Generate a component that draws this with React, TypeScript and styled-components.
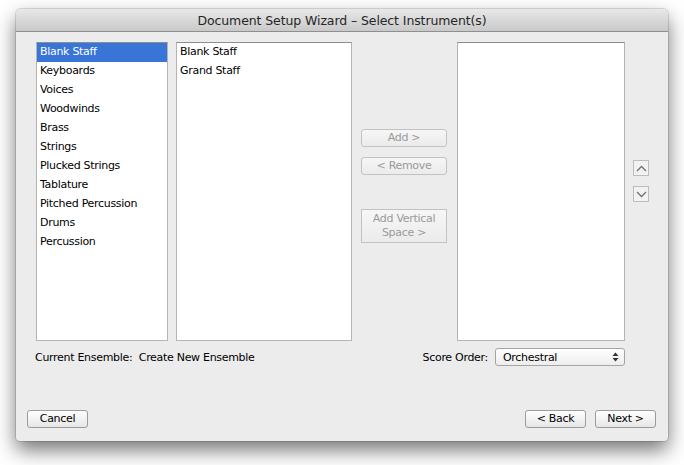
import styled, { createGlobalStyle } from 'styled-components'

const GlobalStyle = createGlobalStyle`
    html, body {
        margin: 0;
        padding: 0;
        background: #ffffff;
        font-family: "DejaVu Sans", "Liberation Sans", sans-serif;
    }
`

const categories = [
    'Blank Staff',
    'Keyboards',
    'Voices',
    'Woodwinds',
    'Brass',
    'Strings',
    'Plucked Strings',
    'Tablature',
    'Pitched Percussion',
    'Drums',
    'Percussion',
]

const instruments = ['Blank Staff', 'Grand Staff']

const App = () => (
    <>
        <GlobalStyle />
        <Page>
            <Window>
                <TitleBar>Document Setup Wizard – Select Instrument(s)</TitleBar>
                <Body>
                    <MainRow>
                        <ListBox $width={132}>
                            {categories.map((c, i) => (
                                <ListItem key={c} $selected={i === 0}>{c}</ListItem>
                            ))}
                        </ListBox>
                        <ListBox $width={176}>
                            {instruments.map((c) => (
                                <ListItem key={c}>{c}</ListItem>
                            ))}
                        </ListBox>
                        <MiddleColumn>
                            <PushButton disabled>Add &gt;</PushButton>
                            <PushButton disabled>&lt; Remove</PushButton>
                            <TallButton disabled>Add Vertical<br />Space &gt;</TallButton>
                        </MiddleColumn>
                        <ListBox $width={168} />
                        <ArrowColumn>
                            <ArrowButton>
                                <svg width="11" height="7" viewBox="0 0 11 7">
                                    <path d="M1 6 L5.5 1.5 L10 6" fill="none" stroke="#707070" strokeWidth="1.3" />
                                </svg>
                            </ArrowButton>
                            <ArrowButton>
                                <svg width="11" height="7" viewBox="0 0 11 7">
                                    <path d="M1 1 L5.5 5.5 L10 1" fill="none" stroke="#707070" strokeWidth="1.3" />
                                </svg>
                            </ArrowButton>
                        </ArrowColumn>
                    </MainRow>
                    <InfoRow>
                        <Ensemble>Current Ensemble:&nbsp; Create New Ensemble</Ensemble>
                        <ScoreOrder>
                            <span>Score Order:</span>
                            <Select>
                                <span>Orchestral</span>
                                <svg width="7" height="10" viewBox="0 0 7 10">
                                    <path d="M0.5 4 L3.5 0.5 L6.5 4 Z" fill="#333" />
                                    <path d="M0.5 6 L3.5 9.5 L6.5 6 Z" fill="#333" />
                                </svg>
                            </Select>
                        </ScoreOrder>
                    </InfoRow>
                    <Footer>
                        <FooterButton>Cancel</FooterButton>
                        <FooterRight>
                            <FooterButton>&lt; Back</FooterButton>
                            <FooterButton>Next &gt;</FooterButton>
                        </FooterRight>
                    </Footer>
                </Body>
            </Window>
        </Page>
    </>
)

export default App

const Page = styled.div`
    width: 684px;
    height: 465px;
    padding: 9px 16px 0 16px;
    box-sizing: border-box;
`

const Window = styled.div`
    width: 652px;
    height: 432px;
    background: #ececec;
    border-radius: 5px 5px 4px 4px;
    box-shadow: 0 9px 20px rgba(0, 0, 0, 0.55), 0 0 0 1px rgba(0, 0, 0, 0.12);
    display: flex;
    flex-direction: column;
    overflow: hidden;
`

const TitleBar = styled.div`
    height: 22px;
    flex: none;
    display: flex;
    align-items: center;
    justify-content: center;
    font-size: 12.5px;
    color: #262626;
    letter-spacing: -0.1px;
    background: linear-gradient(#e8e8e8, #c9c9c9);
    border-bottom: 1px solid #8f8f8f;
    border-radius: 5px 5px 0 0;
`

const Body = styled.div`
    flex: 1;
    padding: 10px 0 0 20px;
    font-size: 11px;
    color: #000;
    letter-spacing: -0.3px;
`

const MainRow = styled.div`
    display: flex;
    align-items: flex-start;
    height: 299px;
`

const ListBox = styled.div<{ $width: number }>`
    width: ${(p) => p.$width}px;
    height: 299px;
    box-sizing: border-box;
    background: #fff;
    border: 1px solid #b4b4b4;
    border-top-color: #8e8e8e;
    margin-right: 8px;
    &:nth-child(4) {
        margin-right: 0;
    }
`

const ListItem = styled.div<{ $selected?: boolean }>`
    height: 19px;
    line-height: 18px;
    padding-left: 3px;
    white-space: nowrap;
    background: ${(p) => (p.$selected ? '#3875d7' : 'transparent')};
    color: ${(p) => (p.$selected ? '#fff' : '#000')};
`

const MiddleColumn = styled.div`
    width: 96px;
    margin-left: -8px;
    padding: 87px 0 0 9px;
    display: flex;
    flex-direction: column;
    gap: 10px;
`

const PushButton = styled.button`
    width: 86px;
    height: 18px;
    padding: 0;
    font-family: inherit;
    font-size: 11px;
    letter-spacing: -0.3px;
    color: #9a9a9a;
    border: 1px solid #c2c2c2;
    border-radius: 3px;
    background: linear-gradient(#f6f6f6, #ebebeb);
    line-height: 16px;
`

const TallButton = styled(PushButton)`
    height: 34px;
    margin-top: 24px;
    border-radius: 0;
    line-height: 14px;
`

const ArrowColumn = styled.div`
    padding: 118px 0 0 8px;
    display: flex;
    flex-direction: column;
    gap: 10px;
`

const ArrowButton = styled.div`
    width: 16px;
    height: 16px;
    box-sizing: border-box;
    border: 1px solid #bdbdbd;
    background: #f2f2f2;
    display: flex;
    align-items: center;
    justify-content: center;
`

const InfoRow = styled.div`
    display: flex;
    align-items: center;
    justify-content: space-between;
    width: 590px;
    margin-left: -1px;
    margin-top: 7px;
    height: 18px;
`

const Ensemble = styled.div`
    white-space: nowrap;
`

const ScoreOrder = styled.div`
    display: flex;
    align-items: center;
    gap: 7px;
`

const Select = styled.div`
    width: 130px;
    height: 18px;
    box-sizing: border-box;
    border: 1px solid #a5a5a5;
    border-radius: 3px;
    background: linear-gradient(#ffffff, #ededed);
    display: flex;
    align-items: center;
    justify-content: space-between;
    padding: 0 5px 0 7px;
`

const Footer = styled.div`
    display: flex;
    justify-content: space-between;
    width: 629px;
    margin-left: -9px;
    margin-top: 44px;
`

const FooterRight = styled.div`
    display: flex;
    gap: 9px;
`

const FooterButton = styled.button`
    width: 61px;
    height: 18px;
    padding: 0;
    font-family: inherit;
    font-size: 11px;
    letter-spacing: -0.3px;
    color: #000;
    border: 1px solid #9c9c9c;
    border-radius: 3px;
    background: linear-gradient(#ffffff, #e6e6e6);
    line-height: 16px;
`
